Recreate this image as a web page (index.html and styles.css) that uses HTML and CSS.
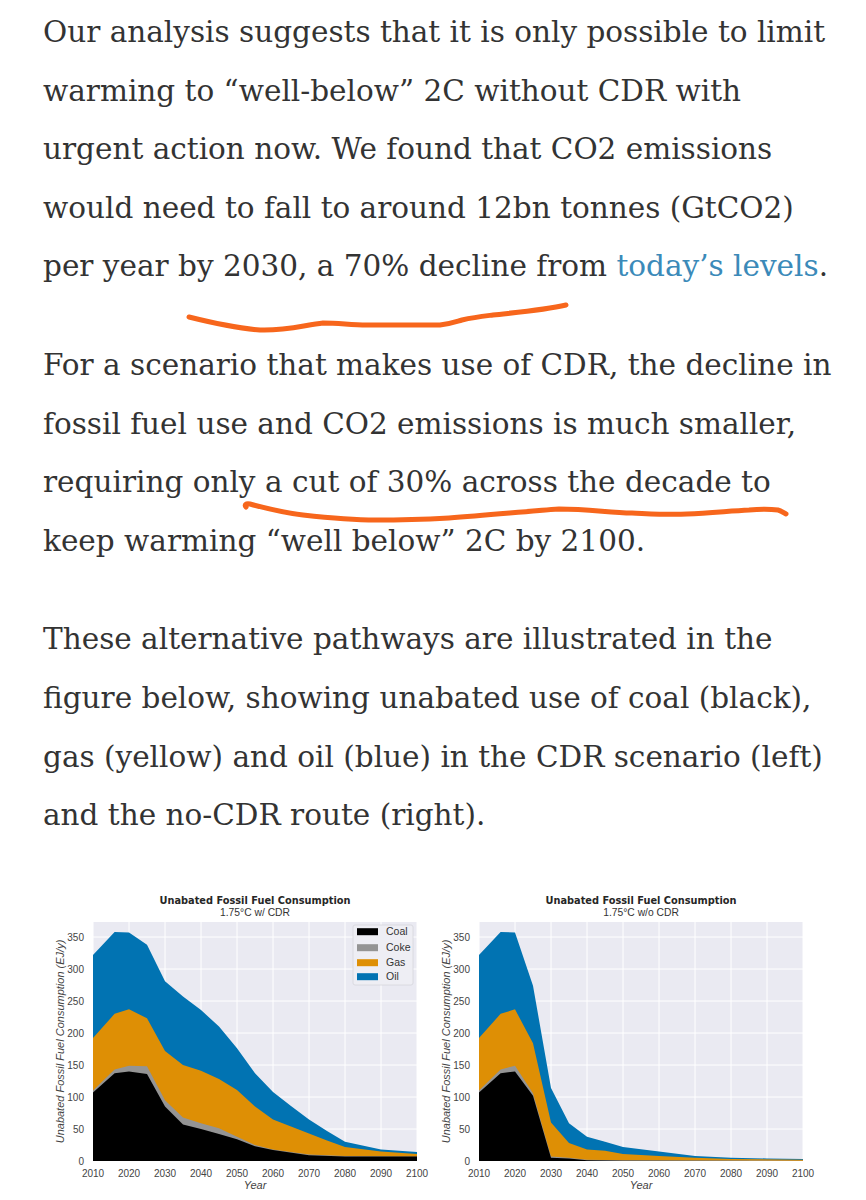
FILE: index.html
```html
<!DOCTYPE html>
<html lang="en">
<head>
<meta charset="utf-8">
<title>Fossil fuel pathways</title>
<link rel="stylesheet" href="styles.css">
</head>
<body>
<main class="article">
  <p class="para">Our analysis suggests that it is only possible to limit warming to “well-below” 2C without CDR with urgent action now. We found that CO2 emissions would need to fall to around 12bn tonnes (GtCO2) per year by 2030, a 70% decline from <a class="link" href="#levels">today’s levels</a>.</p>
  <p class="para">For a scenario that makes use of CDR, the decline in fossil fuel use and CO2 emissions is much smaller, requiring only a cut of 30% across the decade to keep warming “well below” 2C by 2100.</p>
  <p class="para">These alternative pathways are illustrated in the figure below, showing unabated use of coal (black), gas (yellow) and oil (blue) in the CDR scenario (left) and the no-CDR route (right).</p>

  <div class="figure">
    <svg class="chart" width="386" height="315" viewBox="0 0 386 315">
      <text class="c-title" x="215" y="19">Unabated Fossil Fuel Consumption</text>
      <text class="c-sub" x="215" y="31">1.75°C w/ CDR</text>
      <rect class="c-bg" x="53" y="37" width="324" height="239"/>
      <g class="c-grid">
        <line x1="53" y1="37" x2="53" y2="276"/><line x1="89" y1="37" x2="89" y2="276"/><line x1="125" y1="37" x2="125" y2="276"/><line x1="161" y1="37" x2="161" y2="276"/><line x1="197" y1="37" x2="197" y2="276"/><line x1="233" y1="37" x2="233" y2="276"/><line x1="269" y1="37" x2="269" y2="276"/><line x1="305" y1="37" x2="305" y2="276"/><line x1="341" y1="37" x2="341" y2="276"/><line x1="377" y1="37" x2="377" y2="276"/>
        <line x1="53" y1="244" x2="377" y2="244"/><line x1="53" y1="212" x2="377" y2="212"/><line x1="53" y1="180" x2="377" y2="180"/><line x1="53" y1="148" x2="377" y2="148"/><line x1="53" y1="116" x2="377" y2="116"/><line x1="53" y1="84" x2="377" y2="84"/><line x1="53" y1="52" x2="377" y2="52"/>
      </g>
      <g transform="translate(53 276) scale(3.6 -0.64)">
        <polygon class="s-oil" points="0,0 0,322 6,358 10,357 15,338 20,281 25,257 30,236 35,210 40,176 45,137 50,108 55,86 60,65 65,47 70,30 80,18 90,14 90,0"/>
        <polygon class="s-gas" points="0,0 0,192 6,230 10,237 15,223 20,172 25,150 30,141 35,128 40,111 45,85 50,65 55,54 60,43 65,32 70,22 80,15 90,11 90,0"/>
        <polygon class="s-coke" points="0,0 0,110 6,143 10,149 15,148 20,95 25,68 30,59 35,51 40,38 45,25 50,18 60,10 70,8 90,7 90,0"/>
        <polygon class="s-coal" points="0,0 0,107 6,137 10,140 15,136 20,85 25,57 30,50 35,42 40,34 45,23 50,17 60,9 70,7 90,7 90,0"/>
      </g>
      <g class="c-ytick">
        <text x="44" y="279.5">0</text><text x="44" y="247.5">50</text><text x="44" y="215.5">100</text><text x="44" y="183.5">150</text><text x="44" y="151.5">200</text><text x="44" y="119.5">250</text><text x="44" y="87.5">300</text><text x="44" y="55.5">350</text>
      </g>
      <g class="c-xtick">
        <text x="53" y="292">2010</text><text x="89" y="292">2020</text><text x="125" y="292">2030</text><text x="161" y="292">2040</text><text x="197" y="292">2050</text><text x="233" y="292">2060</text><text x="269" y="292">2070</text><text x="305" y="292">2080</text><text x="341" y="292">2090</text><text x="377" y="292">2100</text>
      </g>
      <text class="c-axis" x="215" y="304">Year</text>
      <text class="c-axis" transform="translate(24 156.5) rotate(-90)">Unabated Fossil Fuel Consumption (EJ/y)</text>
      <g class="c-legend">
        <rect class="l-box" x="313" y="40" width="60" height="60" rx="2"/>
        <rect class="s-coal" x="317" y="43.2" width="21" height="7"/>
        <rect class="s-coke" x="317" y="59.2" width="21" height="7"/>
        <rect class="s-gas" x="317" y="74.2" width="21" height="7"/>
        <rect class="s-oil" x="317" y="88.2" width="21" height="7"/>
        <text x="346" y="50.3">Coal</text>
        <text x="346" y="66.3">Coke</text>
        <text x="346" y="81.3">Gas</text>
        <text x="346" y="95.3">Oil</text>
      </g>
    </svg>

    <svg class="chart" width="386" height="315" viewBox="0 0 386 315">
      <text class="c-title" x="215" y="19">Unabated Fossil Fuel Consumption</text>
      <text class="c-sub" x="215" y="31">1.75°C w/o CDR</text>
      <rect class="c-bg" x="53" y="37" width="324" height="239"/>
      <g class="c-grid">
        <line x1="53" y1="37" x2="53" y2="276"/><line x1="89" y1="37" x2="89" y2="276"/><line x1="125" y1="37" x2="125" y2="276"/><line x1="161" y1="37" x2="161" y2="276"/><line x1="197" y1="37" x2="197" y2="276"/><line x1="233" y1="37" x2="233" y2="276"/><line x1="269" y1="37" x2="269" y2="276"/><line x1="305" y1="37" x2="305" y2="276"/><line x1="341" y1="37" x2="341" y2="276"/><line x1="377" y1="37" x2="377" y2="276"/>
        <line x1="53" y1="244" x2="377" y2="244"/><line x1="53" y1="212" x2="377" y2="212"/><line x1="53" y1="180" x2="377" y2="180"/><line x1="53" y1="148" x2="377" y2="148"/><line x1="53" y1="116" x2="377" y2="116"/><line x1="53" y1="84" x2="377" y2="84"/><line x1="53" y1="52" x2="377" y2="52"/>
      </g>
      <g transform="translate(53 276) scale(3.6 -0.64)">
        <polygon class="s-oil" points="0,0 0,322 6,358 10,357 15,274 20,114 25,59 30,38 35,30 40,22 50,15 60,8 70,5 80,4 90,3 90,0"/>
        <polygon class="s-gas" points="0,0 0,192 6,230 10,237 15,184 20,60 25,28 30,18 35,16 40,11 50,8 60,5 70,3 90,2 90,0"/>
        <polygon class="s-coke" points="0,0 0,110 6,143 10,149 15,106 20,7 25,5 30,2 40,1 90,0.5 90,0"/>
        <polygon class="s-coal" points="0,0 0,107 6,137 10,140 15,102 20,5 25,4 30,1 40,0.3 90,0"/>
      </g>
      <g class="c-ytick">
        <text x="44" y="279.5">0</text><text x="44" y="247.5">50</text><text x="44" y="215.5">100</text><text x="44" y="183.5">150</text><text x="44" y="151.5">200</text><text x="44" y="119.5">250</text><text x="44" y="87.5">300</text><text x="44" y="55.5">350</text>
      </g>
      <g class="c-xtick">
        <text x="53" y="292">2010</text><text x="89" y="292">2020</text><text x="125" y="292">2030</text><text x="161" y="292">2040</text><text x="197" y="292">2050</text><text x="233" y="292">2060</text><text x="269" y="292">2070</text><text x="305" y="292">2080</text><text x="341" y="292">2090</text><text x="377" y="292">2100</text>
      </g>
      <text class="c-axis" x="215" y="304">Year</text>
      <text class="c-axis" transform="translate(24 156.5) rotate(-90)">Unabated Fossil Fuel Consumption (EJ/y)</text>
    </svg>
  </div>

  <svg class="marks" width="866" height="560" viewBox="0 0 866 560" aria-hidden="true">
    <path d="M189,317 C205,321 235,328 260,330 C285,331 305,325 323,323 C340,323 350,325 367,325 L440,325 C450,324 455,322 462,320 C475,317 485,316 493,315 C520,312 545,310 566,305"/>
    <path d="M246,507 C244,505 246,503 250,504 C265,508 285,513 303,515 C330,518 350,520 376,520 C400,520 430,519 449,518 C490,515 530,511 559,509 C590,509 610,513 632,513 C655,514 670,515 687,514 C710,513 730,511 749,510 C760,509 770,509 778,510 C782,511 784,513 786,514"/>
  </svg>
</main>
</body>
</html>
```

FILE: styles.css
```css
html, body {
  margin: 0;
  padding: 0;
  background: #ffffff;
}

.article {
  position: relative;
  width: 792px;
  padding: 3px 0 0 43px;
  font-family: "DejaVu Serif", "Liberation Serif", serif;
  font-size: 29.5px;
  line-height: 58.6px;
  color: #333333;
}

.para {
  margin: 0 0 40px;
}

.link {
  color: #3b8ab9;
  text-decoration: none;
}

.figure {
  display: flex;
  margin-left: -3px;
}

.chart {
  display: block;
  flex: none;
  overflow: visible;
}

.c-title {
  font-family: "DejaVu Sans", sans-serif;
  font-weight: bold;
  font-size: 9.8px;
  fill: #262626;
  text-anchor: middle;
}

.c-sub {
  font-family: "Liberation Sans", Arial, sans-serif;
  font-size: 10.3px;
  fill: #333333;
  text-anchor: middle;
}

.c-bg {
  fill: #eaeaf2;
}

.c-grid line {
  stroke: #ffffff;
  stroke-width: 1;
}

.s-oil { fill: #0173b2; }
.s-gas { fill: #de8f05; }
.s-coke { fill: #949494; }
.s-coal { fill: #000000; }

.c-ytick text,
.c-xtick text {
  font-family: "Liberation Sans", Arial, sans-serif;
  font-size: 10px;
  fill: #444444;
}

.c-ytick text { text-anchor: end; }
.c-xtick text { text-anchor: middle; }

.c-axis {
  font-family: "Liberation Sans", Arial, sans-serif;
  font-style: italic;
  font-size: 11px;
  fill: #444444;
  text-anchor: middle;
}

.l-box {
  fill: #eeeef4;
  stroke: #d6d6dc;
  stroke-width: 0.8;
}

.c-legend text {
  font-family: "Liberation Sans", Arial, sans-serif;
  font-size: 10.5px;
  fill: #333333;
}

.marks {
  position: absolute;
  top: 0;
  left: 0;
  pointer-events: none;
}

.marks path {
  fill: none;
  stroke: #f7661c;
  stroke-width: 5;
  stroke-linecap: round;
  stroke-linejoin: round;
}
```
